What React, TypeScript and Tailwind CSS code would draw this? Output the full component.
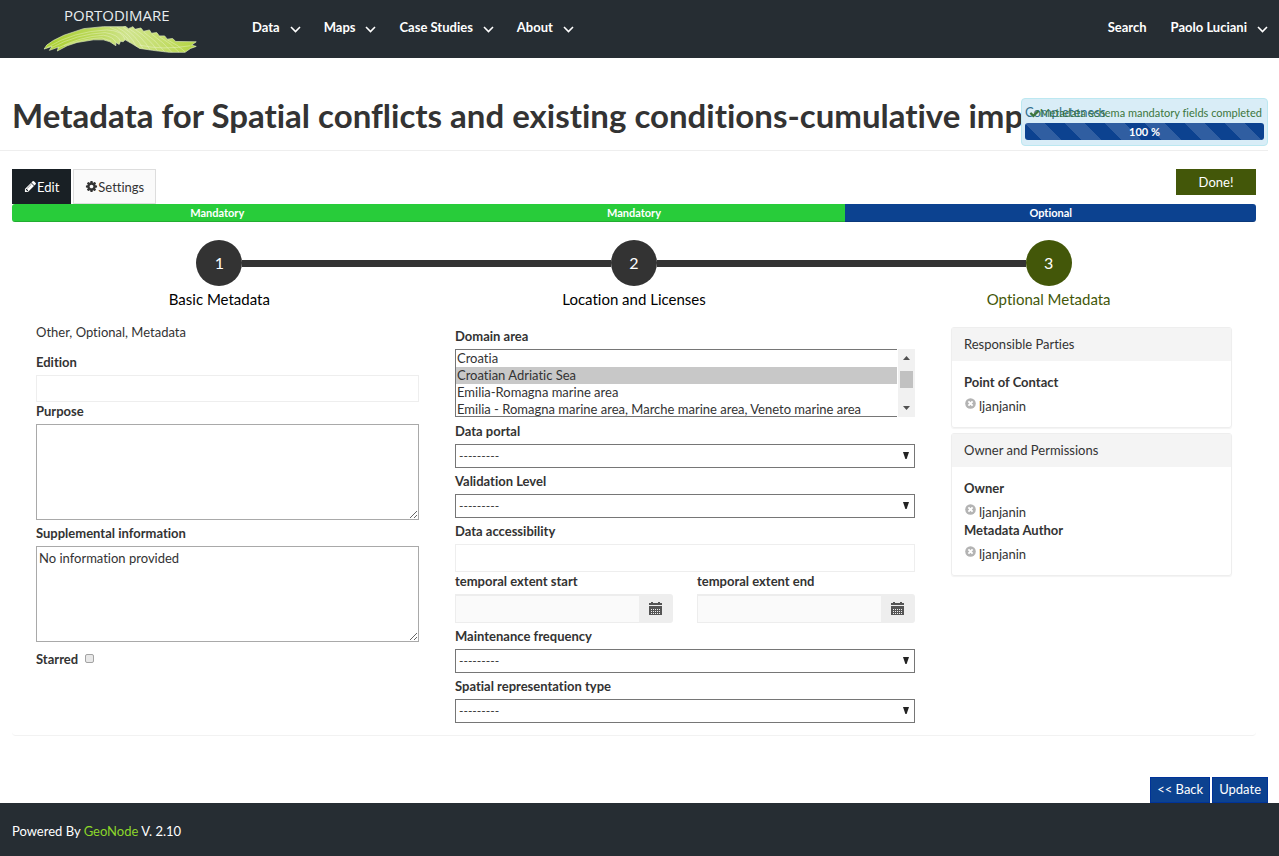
import { useEffect, useRef } from "react";
import type { ReactNode } from "react";

const CHECK =
  "M1671 566q0 40-28 68l-724 724-136 136q-28 28-68 28t-68-28l-136-136-362-362q-28-28-28-68t28-68l136-136q28-28 68-28t68 28l294 295 656-657q28-28 68-28t68 28l136 136q28 28 28 68z";
const PENCIL =
  "M491 1536l91-91-235-235-91 91v107h128v128h107zm523-928q0-22-22-22-10 0-17 7l-542 542q-7 7-7 17 0 22 22 22 10 0 17-7l542-542q7-7 7-17zm-54-192l416 416-832 832h-416v-416zm683 96q0 53-37 90l-166 166-416-416 166-165q36-38 90-38 53 0 91 38l235 234q37 39 37 91z";
const COG =
  "M1152 896q0-106-75-181t-181-75-181 75-75 181 75 181 181 75 181-75 75-181zm512-109v222q0 12-8 23t-20 13l-185 28q-19 54-39 91 35 50 107 138 10 12 10 25t-9 23q-27 37-99 108t-94 71q-12 0-26-9l-138-108q-44 23-91 38-16 136-29 186-7 28-36 28h-222q-14 0-24.5-8.5t-11.5-21.5l-28-184q-49-16-90-37l-141 107q-10 9-25 9-14 0-25-11-126-114-165-168-7-10-7-23 0-12 8-23 15-21 51-66.5t54-70.5q-27-50-41-99l-183-27q-13-2-21-12.5t-8-23.5v-222q0-12 8-23t19-13l186-28q14-46 39-92-40-57-107-138-10-12-10-24 0-10 9-23 26-36 98.5-107.5t94.5-71.5q13 0 26 10l138 107q44-23 91-38 16-136 29-186 7-28 36-28h222q14 0 24.5 8.5t11.5 21.5l28 184q49 16 90 37l142-107q9-9 24-9 13 0 25 10 129 119 165 170 7 8 7 22 0 12-8 23-15 21-51 66.5t-54 70.5q26 50 41 98l183 28q13 2 21 12.5t8 23.5z";

function Glyph({ d, className }: { d: string; className: string }) {
  return (
    <svg viewBox="0 0 1792 1792" fill="currentColor" className={className} aria-hidden="true">
      <path d={d} />
    </svg>
  );
}

function Chevron() {
  return (
    <svg viewBox="0 0 11 7" className="mt-[2px] h-[7px] w-[11px]" fill="none" stroke="currentColor" strokeWidth="1.6" aria-hidden="true">
      <path d="M1 1l4.5 4.5L10 1" />
    </svg>
  );
}

function Logo() {
  return (
    <a href="#home" className="flex w-[155px] flex-col gap-[2px] pt-[2px] text-[#e8edf0]">
      <span className="pl-[21px] font-['Open_Sans',sans-serif] text-[15px] leading-[18px] font-normal">PORTODIMARE</span>
      <svg viewBox="0 0 464 82" className="h-[27px] w-[155px]" aria-hidden="true">
        <defs>
          <linearGradient id="wave" x1="0" y1="0" x2="1" y2="0">
            <stop offset="0" stopColor="#a9cf2f" />
            <stop offset="0.35" stopColor="#bcd95c" />
            <stop offset="0.55" stopColor="#d0e48e" />
            <stop offset="0.8" stopColor="#c3dd68" />
            <stop offset="1" stopColor="#b4d542" />
          </linearGradient>
        </defs>
        <path
          fill="url(#wave)"
          stroke="#e4efc0"
          strokeWidth="2"
          d="M0 70L8 58L28 44L60 28L120 8L180 2L240 2L246 0L256 8L270 2L276 10L294 6L302 16L320 12L326 22L342 20L350 30L366 30L374 40L390 38L400 47L462 48L448 58L462 62L445 68L428 80L380 80L330 74L290 68L264 52L246 42L240 48L232 46L228 56L218 50L218 60L200 48L180 42L150 42L100 50L70 60L40 76L44 64L16 74L24 62Z"
        />
        <g fill="none" stroke="#f2f8dc" strokeWidth="2" strokeOpacity="0.6">
          <path d="M8 66Q90 16 190 12Q240 14 246 42" />
          <path d="M22 66Q100 24 185 20Q225 26 232 46" />
          <path d="M40 68Q110 32 180 28Q210 32 218 50" />
          <path d="M60 60Q120 38 175 36L204 46" />
          <path d="M200 4Q246 20 262 52" />
          <path d="M222 4Q262 24 280 62" />
          <path d="M240 4Q280 30 300 68" />
          <path d="M258 8Q300 34 322 73" />
          <path d="M276 10Q320 38 344 75" />
          <path d="M302 18Q340 44 366 78" />
          <path d="M326 24Q364 50 388 80" />
          <path d="M350 32Q388 54 410 80" />
          <path d="M374 42Q408 58 428 78" />
          <path d="M290 58Q360 74 444 60" />
        </g>
      </svg>
    </a>
  );
}

function Label({ htmlFor, children }: { htmlFor: string; children: ReactNode }) {
  return (
    <label htmlFor={htmlFor} className="mb-1 block leading-[18px] font-bold">
      {children}
    </label>
  );
}

function EmptySelect({ id, label }: { id: string; label: string }) {
  return (
    <div className="mt-1">
      <Label htmlFor={id}>{label}</Label>
      <div className="relative">
        <select id={id} className="block h-6 w-full appearance-none border border-[#767676] bg-white px-[3px] text-[12px] leading-[18px]">
          <option>---------</option>
        </select>
        <svg viewBox="0 0 6 7" className="pointer-events-none absolute top-2 right-[6px] h-[7px] w-[6px]" fill="#222" aria-hidden="true">
          <path d="M0 0h6L3.6 7H2.4z" />
        </svg>
      </div>
    </div>
  );
}

const AREAS = [
  "Albania",
  "Croatia",
  "Croatian Adriatic Sea",
  "Emilia-Romagna marine area",
  "Emilia - Romagna marine area, Marche marine area, Veneto marine area",
  "Greece",
  "Italy",
  "Montenegro",
];

function DomainArea() {
  const ref = useRef<HTMLSelectElement>(null);
  useEffect(() => {
    if (ref.current) ref.current.scrollTop = 17;
  }, []);
  return (
    <div className="mb-[5px]">
      <Label htmlFor="domain">Domain area</Label>
      <div className="relative">
        <select
          id="domain"
          ref={ref}
          multiple
          size={4}
          defaultValue={["Croatian Adriatic Sea"]}
          className="block h-[68px] w-full border border-[#767676] bg-white text-[13px]"
        >
          {AREAS.map((a) => (
            <option key={a} className="h-[17px] px-[1px] py-0 leading-[17px] text-[#333] checked:bg-[linear-gradient(#c8c8c8,#c8c8c8)]">
              {a}
            </option>
          ))}
        </select>
        <div className="pointer-events-none absolute inset-y-0 right-0 flex w-[18px] flex-col items-center border-l border-white bg-[#f1f1f1]" aria-hidden="true">
          <svg viewBox="0 0 17 17" className="size-[17px]" fill="#505050">
            <path d="M5 11L8.5 7L12 11z" />
          </svg>
          <span className="mt-[5px] h-[17px] w-[13px] bg-[#c1c1c1]" />
          <svg viewBox="0 0 17 17" className="mt-auto size-[17px]" fill="#505050">
            <path d="M5 6L8.5 10L12 6z" />
          </svg>
        </div>
      </div>
    </div>
  );
}

function DateField({ id, label }: { id: string; label: string }) {
  return (
    <div>
      <Label htmlFor={id}>{label}</Label>
      <div className="flex h-[29px]">
        <input id={id} className="min-w-0 flex-1 border border-t-2 border-r-0 border-[#ededed] bg-[#fafafa] px-2" />
        <button type="button" aria-label={"Pick " + label} className="flex w-[34px] items-center justify-center rounded-r-[3px] bg-[#eee] pr-[2px]">
          <svg viewBox="0 0 13 13" className="size-[13px]" aria-hidden="true">
            <path fill="#555" d="M0 3V1h2V0h2v1h5V0h2v1h2v2zM0 4h13v9H0z" />
            <path stroke="#eee" strokeWidth="1" strokeDasharray="1 1" d="M2 7.5h9M2 9.5h9M2 11.5h9" />
          </svg>
        </button>
      </div>
    </div>
  );
}

function Party({ role }: { role: string }) {
  return (
    <div>
      <h3 className="leading-[18px] font-bold">{role}</h3>
      <div className="mt-[7px] flex leading-[17px]">
        <button type="button" aria-label={"Remove " + role} className="mr-[3px] ml-[1px] flex h-[11px] items-center">
          <svg viewBox="0 0 11 11" className="size-[11px]" aria-hidden="true">
            <circle cx="5.5" cy="5.5" r="5.3" fill="#b3b3b3" />
            <path d="M3.4 3.4l4.2 4.2M7.6 3.4L3.4 7.6" stroke="#fff" strokeWidth="1.9" />
          </svg>
        </button>
        <span>ljanjanin</span>
      </div>
    </div>
  );
}

function Panel({ title, roles }: { title: string; roles: string[] }) {
  return (
    <section className="rounded-[3px] border border-[#eee] shadow-[0_1px_1px_rgba(0,0,0,0.05)]">
      <h2 className="bg-[#f4f4f4] px-3 py-2 leading-[17px]">{title}</h2>
      <div className="p-3">
        {roles.map((r) => (
          <Party key={r} role={r} />
        ))}
      </div>
    </section>
  );
}

const STEPS = [
  { label: "Basic Metadata", circle: "bg-[#333]", text: "text-black" },
  { label: "Location and Licenses", circle: "bg-[#333]", text: "text-black" },
  { label: "Optional Metadata", circle: "bg-[#435709]", text: "text-[#435709]" },
];

export default function App() {
  return (
    <div className="flex min-h-screen flex-col bg-white font-['Lato',sans-serif] text-[13px] text-[#333] [font-variant-ligatures:none]">
      <header className="flex h-[58px] items-center bg-[#262d33] pr-[11px] pb-[2px] pl-[43px] font-bold text-white">
        <Logo />
        <nav className="ml-[54px] flex gap-[23px]">
          {["Data", "Maps", "Case Studies", "About"].map((n) => (
            <a key={n} href="#menu" className="flex items-center gap-[10px]">
              {n}
              <Chevron />
            </a>
          ))}
        </nav>
        <nav className="ml-auto flex gap-6">
          <a href="#search">Search</a>
          <a href="#account" className="flex items-center gap-[10px]">
            Paolo Luciani
            <Chevron />
          </a>
        </nav>
      </header>

      <main>
        <div className="relative mr-[11px] h-[93px] overflow-hidden border-b border-[#eee] pt-[35px] pl-3">
          <h1 className="text-[33px] leading-[44px] font-bold whitespace-nowrap">
            Metadata for Spatial conflicts and existing conditions-cumulative imp
          </h1>
          <div className="absolute top-10 right-0 h-12 w-[247px] rounded border border-[#bce8f1] bg-[#d9edf7] p-[3px]">
            <span className="absolute top-1 left-[3px] leading-[18px] text-[#31708f]">Completeness</span>
            <span className="absolute top-[5px] right-[5px] flex items-center text-[11px] leading-[18px] whitespace-nowrap text-[#3c763d]">
              <Glyph d={CHECK} className="size-[11px]" />
              Metadata schema mandatory fields completed
            </span>
            <div className="mt-[21px] h-[17px] rounded-[3px] bg-[#0c4290] bg-[linear-gradient(45deg,rgba(255,255,255,0.15)_25%,transparent_25%,transparent_50%,rgba(255,255,255,0.15)_50%,rgba(255,255,255,0.15)_75%,transparent_75%,transparent)] bg-size-[40px_40px] text-center text-[11px] leading-[17px] font-bold text-white">
              100 %
            </div>
          </div>
        </div>

        <div className="mr-[23px] ml-3 rounded-b border-b border-[#f2f2f2] pt-[18px] pb-3">
          <div className="flex items-start gap-[2px] leading-[18px]">
            <a href="#edit" className="flex h-[35px] items-center bg-[#192025] px-3 text-white">
              <Glyph d={PENCIL} className="size-[13px]" />
              Edit
            </a>
            <a href="#settings" className="flex h-[35px] items-center border border-[#ddd] bg-[#fafafa] px-[11px]">
              <Glyph d={COG} className="size-[13px]" />
              Settings
            </a>
            <button type="button" className="ml-auto h-[26px] w-20 bg-[#435709] text-white">
              Done!
            </button>
          </div>

          <div className="flex h-[18px] overflow-hidden rounded-[3px] text-center text-[11px] leading-[18px] font-bold text-white">
            <div className="w-[33%] bg-[#28cc3a] shadow-[inset_0_-1px_0_rgba(0,0,0,0.15)]">Mandatory</div>
            <div className="w-[34%] bg-[#28cc3a] shadow-[inset_0_-1px_0_rgba(0,0,0,0.15)]">Mandatory</div>
            <div className="w-[33%] bg-[#0c4290] shadow-[inset_0_-1px_0_rgba(0,0,0,0.15)]">Optional</div>
          </div>

          <ol className="mt-[18px] grid grid-cols-3">
            {STEPS.map((s, i) => (
              <li key={s.label} className="flex flex-col items-center">
                <div className="flex w-full items-center">
                  <span className={i > 0 ? "h-[7px] flex-1 bg-[#333]" : "h-[7px] flex-1"} />
                  <span className={"flex size-[46px] items-center justify-center rounded-full text-[16px] text-white " + s.circle}>{i + 1}</span>
                  <span className={i < 2 ? "h-[7px] flex-1 bg-[#333]" : "h-[7px] flex-1"} />
                </div>
                <span className={"mt-[3px] text-[15px] leading-5 " + s.text}>{s.label}</span>
              </li>
            ))}
          </ol>

          <form className="mt-[13px] grid grid-cols-[383fr_460fr_281fr] items-start gap-9 px-6">
            <div>
              <p className="mb-[11px] leading-5">Other, Optional, Metadata</p>
              <Label htmlFor="edition">Edition</Label>
              <input id="edition" className="block h-[27px] w-full border border-[#eee] px-2" />
              <Label htmlFor="purpose">Purpose</Label>
              <textarea id="purpose" className="block h-24 w-full resize border border-[#a9a9a9] p-[2px]" />
              <div className="mt-1">
                <Label htmlFor="supplemental">Supplemental information</Label>
                <textarea
                  id="supplemental"
                  defaultValue="No information provided"
                  className="block h-24 w-full resize border border-[#a9a9a9] p-[2px] leading-[18px]"
                />
              </div>
              <div className="mt-2 flex items-center gap-[7px]">
                <label htmlFor="starred" className="leading-[18px] font-bold">
                  Starred
                </label>
                <input
                  id="starred"
                  type="checkbox"
                  className="mb-[2px] size-[9px] appearance-none rounded-[2px] border border-[#a3a3a3] bg-[#e8e8e8]"
                />
              </div>
            </div>

            <div className="pt-[5px]">
              <DomainArea />
              <EmptySelect id="portal" label="Data portal" />
              <EmptySelect id="validation" label="Validation Level" />
              <div className="mt-1">
                <Label htmlFor="accessibility">Data accessibility</Label>
                <input id="accessibility" className="block h-7 w-full border border-[#eee] px-2" />
              </div>
              <div className="grid grid-cols-2 gap-6">
                <DateField id="start" label="temporal extent start" />
                <DateField id="end" label="temporal extent end" />
              </div>
              <EmptySelect id="maintenance" label="Maintenance frequency" />
              <EmptySelect id="spatial" label="Spatial representation type" />
            </div>

            <div className="flex flex-col gap-[5px] pt-[5px]">
              <Panel title="Responsible Parties" roles={["Point of Contact"]} />
              <Panel title="Owner and Permissions" roles={["Owner", "Metadata Author"]} />
            </div>
          </form>
        </div>

        <div className="mt-[41px] mr-[11px] flex justify-end gap-[2px] text-white">
          <button type="button" className="h-[26px] border border-[#003399] bg-[#0c4290] px-[6px]">
            &lt;&lt; Back
          </button>
          <button type="button" className="h-[26px] border border-[#003399] bg-[#0c4290] px-[6px]">
            Update
          </button>
        </div>
      </main>

      <footer className="flex-1 bg-[#262d33] px-3 pt-[19px] pb-4 leading-[18px] text-white">
        <p>
          Powered By{" "}
          <a href="#geonode" className="text-[#8cd62a]">
            GeoNode
          </a>{" "}
          V. 2.10
        </p>
      </footer>
    </div>
  );
}
